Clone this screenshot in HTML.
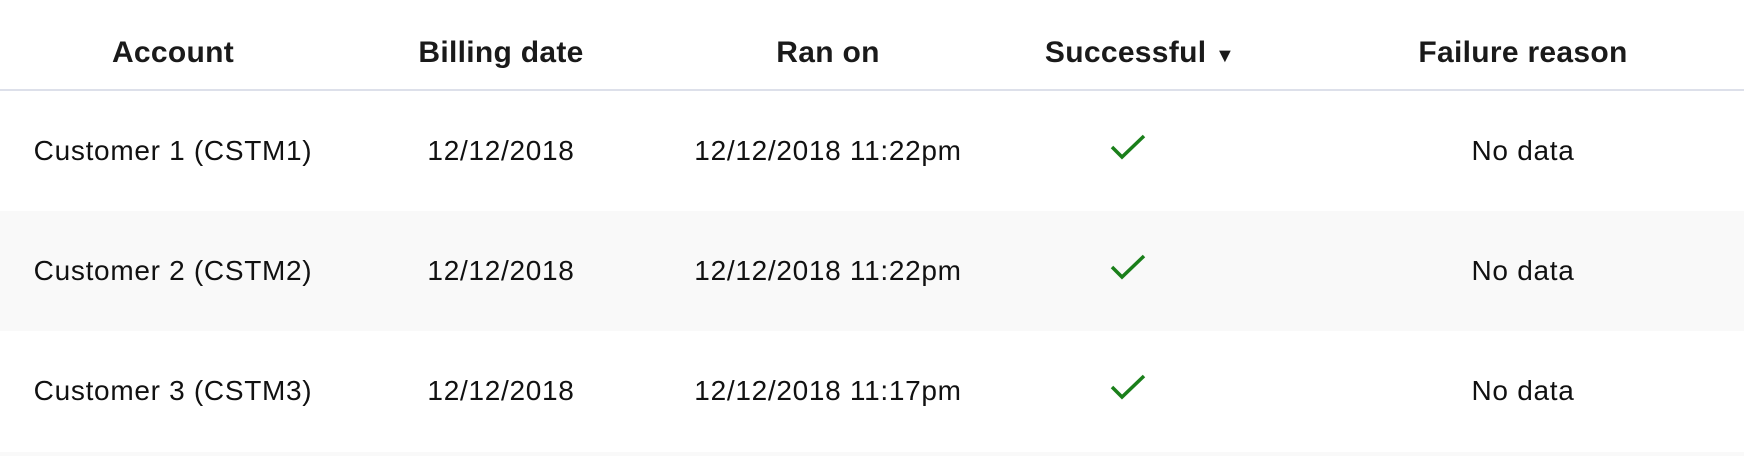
<!DOCTYPE html>
<html style="overflow:hidden;height:456px"><head><style>
body{margin:0;width:1744px;height:456px;overflow:hidden;background:#fff;font-family:"Liberation Sans",Arial,sans-serif;color:#111;position:relative}
.hd{position:absolute;top:0;left:0;width:1744px;height:89px;border-bottom:2px solid #dde0ea}
.row{position:absolute;left:0;width:1744px;height:120px}
.c{position:absolute;transform:translateX(-50%);white-space:nowrap}
.h{top:36px;font-size:30px;font-weight:bold;letter-spacing:0.3px;color:#1a1a1a}
.d{top:44px;font-size:28px;letter-spacing:0.7px}
.ck{position:absolute;left:1110px;top:42px}
</style></head><body>
<div class="hd">
<div class="c h" style="left:173px">Account</div>
<div class="c h" style="left:501px">Billing date</div>
<div class="c h" style="left:828px">Ran on</div>
<div class="c h" style="left:1140px">Successful <span style="font-size:20px">▼</span></div>
<div class="c h" style="left:1523px">Failure reason</div>
</div>
<div class="row" style="top:91px">
<div class="c d" style="left:173px">Customer 1 (CSTM1)</div>
<div class="c d" style="left:501px">12/12/2018</div>
<div class="c d" style="left:828px">12/12/2018 11:22pm</div>
<svg class="ck" width="36" height="28" viewBox="0 0 36 28"><path d="M2 14 L12 24 L34 3" fill="none" stroke="#1a7f1a" stroke-width="3.5"/></svg>
<div class="c d" style="left:1523px">No data</div>
</div>
<div class="row" style="top:211px;background:#f9f9f9">
<div class="c d" style="left:173px">Customer 2 (CSTM2)</div>
<div class="c d" style="left:501px">12/12/2018</div>
<div class="c d" style="left:828px">12/12/2018 11:22pm</div>
<svg class="ck" width="36" height="28" viewBox="0 0 36 28"><path d="M2 14 L12 24 L34 3" fill="none" stroke="#1a7f1a" stroke-width="3.5"/></svg>
<div class="c d" style="left:1523px">No data</div>
</div>
<div class="row" style="top:331px">
<div class="c d" style="left:173px">Customer 3 (CSTM3)</div>
<div class="c d" style="left:501px">12/12/2018</div>
<div class="c d" style="left:828px">12/12/2018 11:17pm</div>
<svg class="ck" width="36" height="28" viewBox="0 0 36 28"><path d="M2 14 L12 24 L34 3" fill="none" stroke="#1a7f1a" stroke-width="3.5"/></svg>
<div class="c d" style="left:1523px">No data</div>
</div>
<div class="row" style="top:452px;height:4px;background:#f9f9f9"></div>
</body></html>
